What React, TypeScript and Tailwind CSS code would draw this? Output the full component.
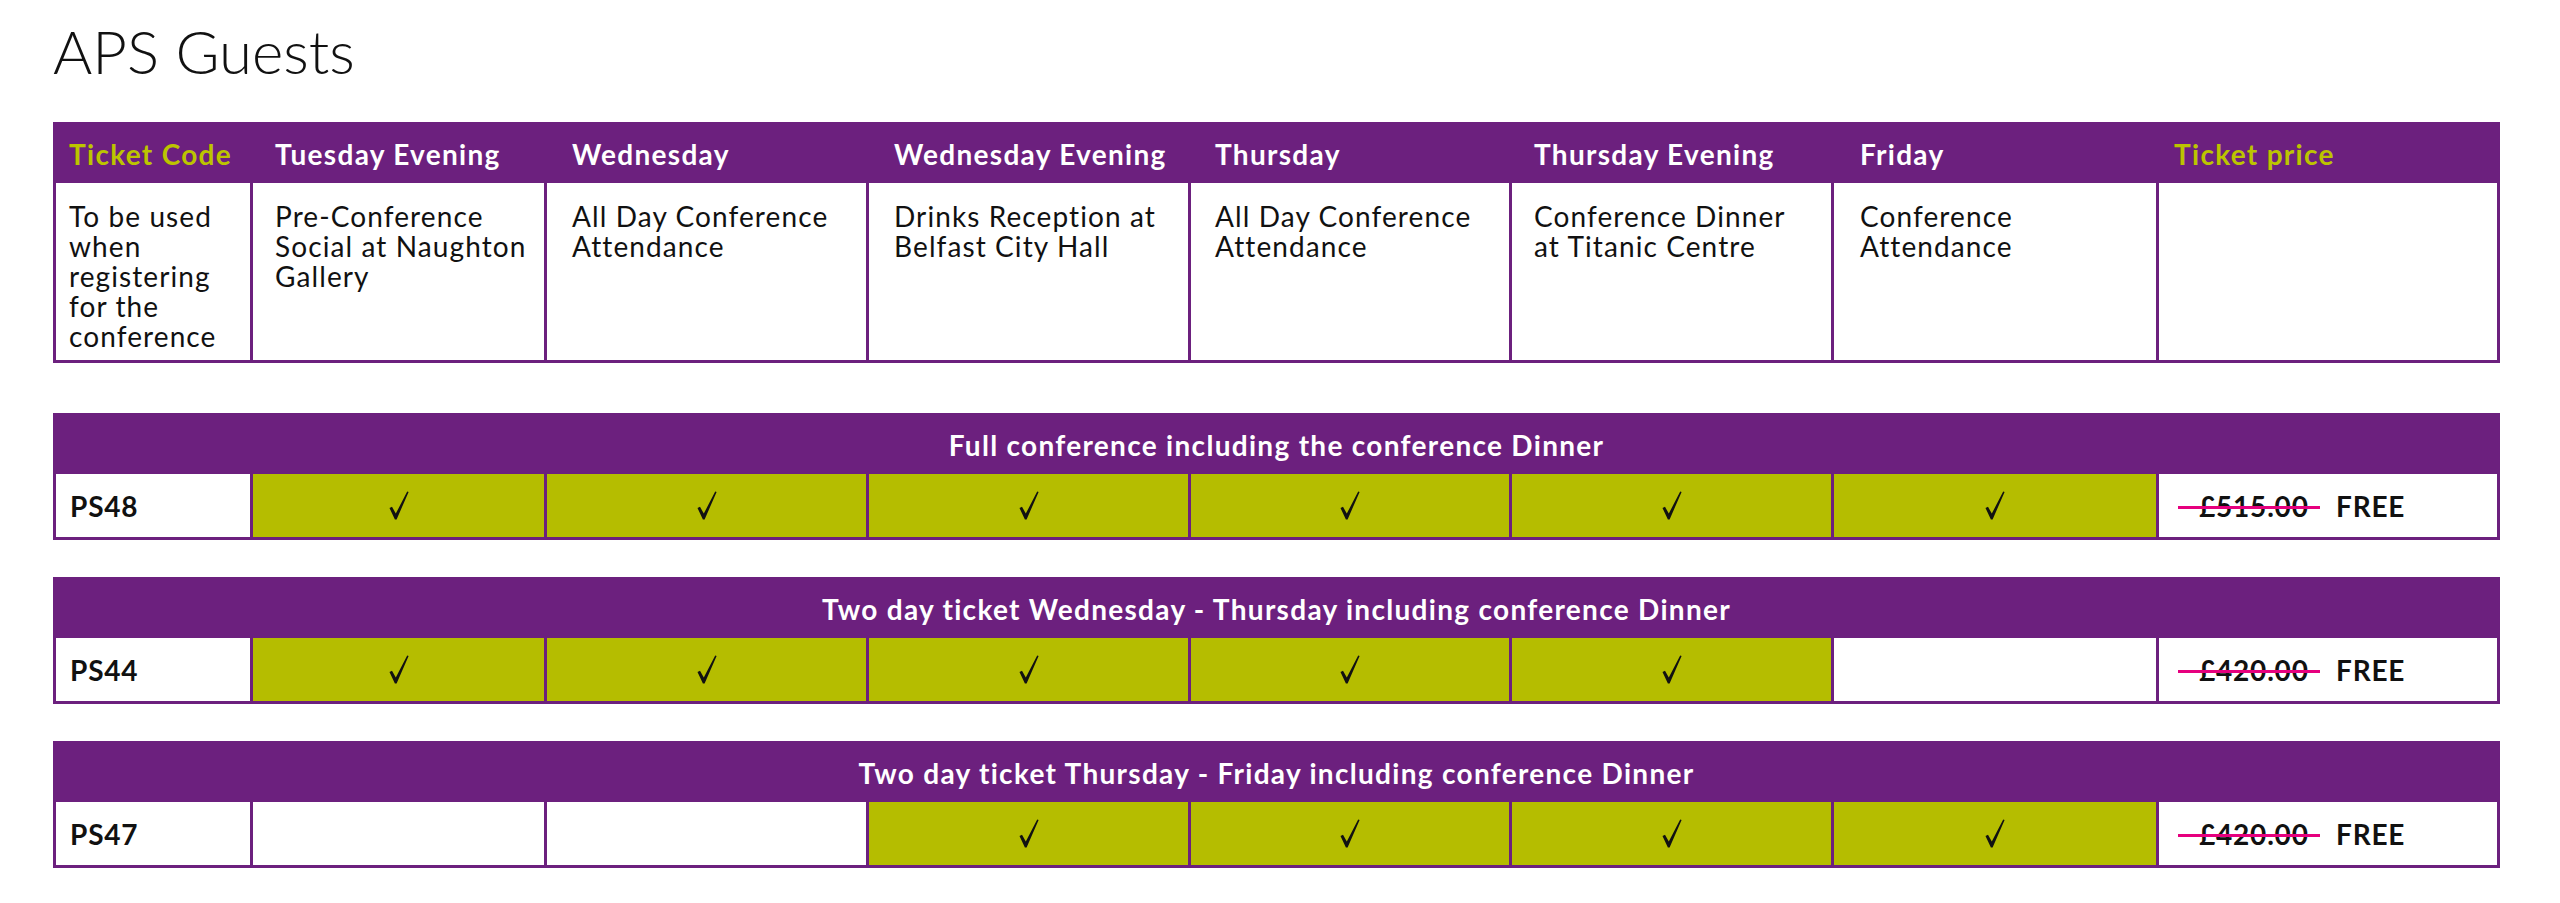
const PURPLE = 'bg-[#6c207e]'

const headers = [
  { label: 'Ticket Code', accent: true },
  { label: 'Tuesday Evening' },
  { label: 'Wednesday' },
  { label: 'Wednesday Evening' },
  { label: 'Thursday' },
  { label: 'Thursday Evening' },
  { label: 'Friday' },
  { label: 'Ticket price', accent: true },
]

const details: string[][] = [
  ['To be used', 'when', 'registering', 'for the', 'conference'],
  ['Pre-Conference', 'Social at Naughton', 'Gallery'],
  ['All Day Conference', 'Attendance'],
  ['Drinks Reception at', 'Belfast City Hall'],
  ['All Day Conference', 'Attendance'],
  ['Conference Dinner', 'at Titanic Centre'],
  ['Conference', 'Attendance'],
  [],
]

// left padding per column, read off the reference
const padLeft = [
  'pl-[13px]',
  'pl-[22px]',
  'pl-[25px]',
  'pl-[25px]',
  'pl-[24px]',
  'pl-[22px]',
  'pl-[26px]',
  'pl-[15px]',
]

const tickets = [
  {
    title: 'Full conference including the conference Dinner',
    code: 'PS48',
    days: [true, true, true, true, true, true],
    price: '£515.00',
  },
  {
    title: 'Two day ticket Wednesday - Thursday including conference Dinner',
    code: 'PS44',
    days: [true, true, true, true, true, false],
    price: '£420.00',
  },
  {
    title: 'Two day ticket Thursday - Friday including conference Dinner',
    code: 'PS47',
    days: [false, false, true, true, true, true],
    price: '£420.00',
  },
]

const gridCols =
  'grid grid-cols-[194px_291px_319px_319px_318px_319px_322px_338px] gap-x-[3px]'

// Lato runs narrower than the original face, so open it up a little
const copy = 'text-[28px] tracking-[1.1px]'
const strong = 'text-[28px] font-bold tracking-[1.3px]'

function Check() {
  return (
    <svg width="20" height="29" viewBox="0 0 20 29" aria-hidden="true">
      <path
        d="M0.5 17 L3 15.8 L6.8 22.6 L18.2 0.4 L19.6 1.1 L7.6 28.4 L5.9 28.4 Z"
        fill="#111"
      />
    </svg>
  )
}

function TicketTable({
  title,
  code,
  days,
  price,
}: {
  title: string
  code: string
  days: boolean[]
  price: string
}) {
  return (
    <section className={`w-[2447px] p-[3px] ${PURPLE}`}>
      <div className={`flex h-[58px] items-center justify-center ${strong} text-white`}>
        {title}
      </div>
      <div className={gridCols}>
        <div className={`flex h-[63px] items-center bg-white pl-[14px] text-[28px] font-bold tracking-[0.8px] text-[#111]`}>
          {code}
        </div>
        {days.map((on, i) => (
          <div
            key={i}
            className={`flex h-[63px] items-center justify-center ${on ? 'bg-[#b5bd00]' : 'bg-white'}`}
          >
            {on ? <Check /> : null}
          </div>
        ))}
        <div className="flex h-[63px] items-center bg-white pl-[19px] text-[28px] font-bold tracking-[0.8px] text-[#111]">
          <span className="relative w-[142px] whitespace-nowrap pl-[21px]">
            {price}
            <span className="absolute left-0 right-0 top-[52%] h-[3px] bg-[#e6007e]" />
          </span>
          <span className="ml-[16px]">FREE</span>
        </div>
      </div>
    </section>
  )
}

export default function App() {
  return (
    <main className="min-h-[903px] bg-white pl-[53px] pt-[14px] font-['Lato',sans-serif] text-[#111]">
      <h1 className="text-[60px] font-light leading-[74px] text-[#111]">APS Guests</h1>

      <section className={`mt-[34px] w-[2447px] p-[3px] ${PURPLE}`}>
        <div className={gridCols}>
          {headers.map((h, i) => (
            <div
              key={h.label}
              className={`flex h-[58px] items-center ${padLeft[i]} ${strong} ${h.accent ? 'text-[#bcc400]' : 'text-white'}`}
            >
              {h.label}
            </div>
          ))}
          {details.map((lines, i) => (
            <div
              key={i}
              className={`h-[177px] bg-white pt-[18px] ${padLeft[i]} ${copy} leading-[30px] text-[#111]`}
            >
              {lines.map((line) => (
                <div key={line} className="whitespace-nowrap">
                  {line}
                </div>
              ))}
            </div>
          ))}
        </div>
      </section>

      <div className="mt-[50px] flex flex-col gap-[37px]">
        {tickets.map((t) => (
          <TicketTable key={t.code} {...t} />
        ))}
      </div>
    </main>
  )
}
